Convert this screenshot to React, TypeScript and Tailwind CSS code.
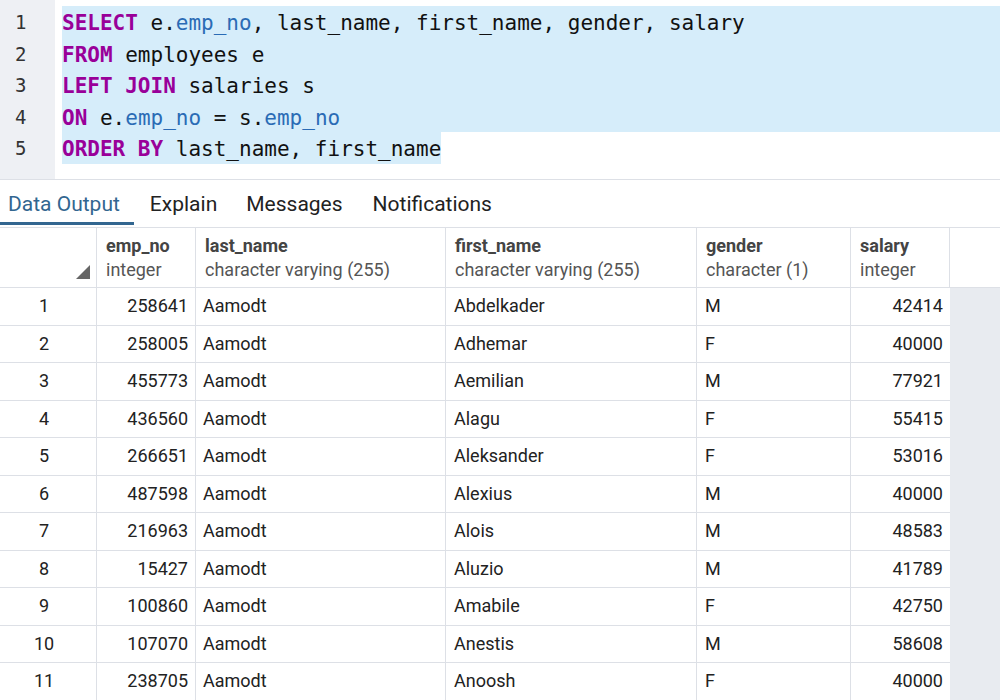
const rows = [
  [1, 258641, "Aamodt", "Abdelkader", "M", 42414],
  [2, 258005, "Aamodt", "Adhemar", "F", 40000],
  [3, 455773, "Aamodt", "Aemilian", "M", 77921],
  [4, 436560, "Aamodt", "Alagu", "F", 55415],
  [5, 266651, "Aamodt", "Aleksander", "F", 53016],
  [6, 487598, "Aamodt", "Alexius", "M", 40000],
  [7, 216963, "Aamodt", "Alois", "M", 48583],
  [8, 15427, "Aamodt", "Aluzio", "M", 41789],
  [9, 100860, "Aamodt", "Amabile", "F", 42750],
  [10, 107070, "Aamodt", "Anestis", "M", 58608],
  [11, 238705, "Aamodt", "Anoosh", "F", 40000],
];

const K = ({ children }: { children: React.ReactNode }) => (
  <span className="text-[#990099] font-bold">{children}</span>
);
const B = ({ children }: { children: React.ReactNode }) => (
  <span className="text-[#2a6bb5]">{children}</span>
);

const columns = [
  { name: "emp_no", type: "integer", w: "w-[99px]" },
  { name: "last_name", type: "character varying (255)", w: "w-[250px]" },
  { name: "first_name", type: "character varying (255)", w: "w-[251px]" },
  { name: "gender", type: "character (1)", w: "w-[154px]" },
  { name: "salary", type: "integer", w: "w-[99px]" },
];

const App = () => {
  return (
    <div className="w-[1000px] h-[700px] overflow-hidden bg-white font-['Roboto',sans-serif]">
      {/* query editor */}
      <div className="flex h-[180px] border-b border-[#dde0e6]">
        <div className="w-[55px] bg-[#eef0f4] pt-[7px] font-['DejaVu_Sans_Mono',monospace] text-[19px] text-[#333]">
          {[1, 2, 3, 4, 5].map((n) => (
            <div key={n} className="h-[31.5px] leading-[31.5px] pl-[15px]">
              {n}
            </div>
          ))}
        </div>
        <div className="flex-1 pt-[6px] pl-[7px] font-['DejaVu_Sans_Mono',monospace] text-[21px] text-[#111] whitespace-pre">
          <div className="bg-[#d6edfa] pt-[2px]">
            <div className="h-[31.5px] leading-[31.5px]">
              <K>SELECT</K> e.<B>emp_no</B>, last_name, first_name, gender, salary
            </div>
            <div className="h-[31.5px] leading-[31.5px]">
              <K>FROM</K> employees e
            </div>
            <div className="h-[31.5px] leading-[31.5px]">
              <K>LEFT JOIN</K> salaries s
            </div>
            <div className="h-[29.5px] leading-[31.5px]">
              <K>ON</K> e.<B>emp_no</B> = s.<B>emp_no</B>
            </div>
          </div>
          <div className="h-[31.5px]">
            <span className="bg-[#d6edfa] inline-block h-[31.5px] leading-[35px]">
              <K>ORDER BY</K> last_name, first_name
            </span>
          </div>
        </div>
      </div>

      {/* tabs */}
      <div className="flex h-[47px] text-[21px] text-[#222]">
        <div className="relative pl-[8px] pr-[14px] pt-[9px] text-[#326690]">
          Data Output
          <div className="absolute left-0 right-0 top-[42px] h-[3px] bg-[#326690]"></div>
        </div>
        <div className="pl-[16px] pt-[9px]">Explain</div>
        <div className="pl-[29px] pt-[9px]">Messages</div>
        <div className="pl-[30px] pt-[9px]">Notifications</div>
      </div>

      {/* result grid */}
      <div className="border-t border-[#dde0e6]">
        <div className="flex h-[60px] border-b border-[#dde0e6]">
          <div className="relative w-[97px] border-r border-[#dde0e6]">
            <svg className="absolute right-[6px] bottom-[8px]" width="14" height="14" viewBox="0 0 14 14">
              <polygon points="14,0 14,14 0,14" fill="#666" />
            </svg>
          </div>
          {columns.map((c) => (
            <div key={c.name} className={`${c.w} border-r border-[#dde0e6] pl-[9px] pt-[6px] text-[18px]`}>
              <div className="font-bold text-[#444] leading-[24px]">{c.name}</div>
              <div className="text-[#555] leading-[24px]">{c.type}</div>
            </div>
          ))}
        </div>
        {rows.map((r) => (
          <div key={r[0]} className="flex h-[37.5px] text-[18px] text-[#222] leading-[36px]">
            <div className="w-[97px] border-r border-b border-[#dde0e6] text-center pr-[8px]">{r[0]}</div>
            <div className="w-[99px] border-r border-b border-[#dde0e6] text-right pr-[7px]">{r[1]}</div>
            <div className="w-[250px] border-r border-b border-[#dde0e6] pl-[7px]">{r[2]}</div>
            <div className="w-[251px] border-r border-b border-[#dde0e6] pl-[8px]">{r[3]}</div>
            <div className="w-[154px] border-r border-b border-[#dde0e6] pl-[8px]">{r[4]}</div>
            <div className="w-[99px] border-b border-[#dde0e6] text-right pr-[7px]">{r[5]}</div>
            <div className="flex-1 bg-[#e8ebf0]"></div>
          </div>
        ))}
      </div>
    </div>
  );
};

export default App;
